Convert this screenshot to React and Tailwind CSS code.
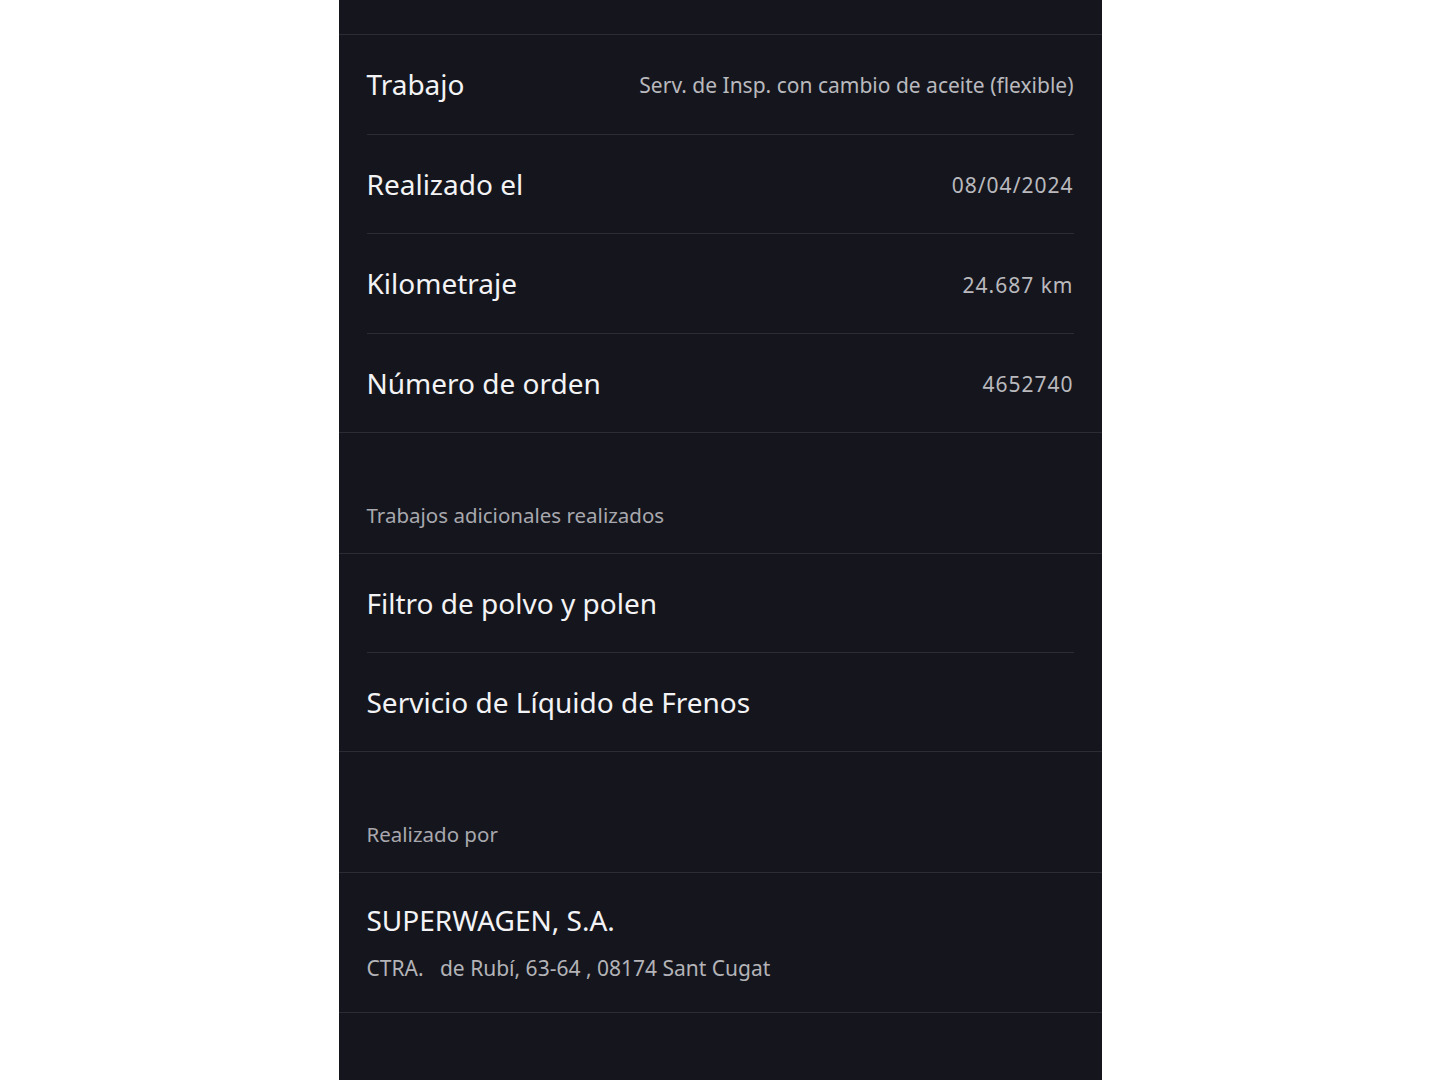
const details = [
  { label: 'Trabajo', value: 'Serv. de Insp. con cambio de aceite (flexible)' },
  { label: 'Realizado el', value: '08/04/2024', numeric: true },
  { label: 'Kilometraje', value: '24.687 km', numeric: true },
  { label: 'Número de orden', value: '4652740', numeric: true },
];

const extras = ['Filtro de polvo y polen', 'Servicio de Líquido de Frenos'];

function SectionHeader({ children }) {
  return (
    <div className="flex h-[121px] items-end border-b border-[#2c2d34] px-7 pb-[24px] text-[20.5px] leading-7 text-[#a8a8ae]">
      {children}
    </div>
  );
}

export default function App() {
  return (
    <div
      className="flex min-h-[1080px] justify-center bg-white"
      style={{ fontFamily: '"Noto Sans", "Open Sans", sans-serif' }}
    >
      <div className="flex w-[763px] flex-col bg-[#15161d]">
        <div className="h-[35px] border-b border-[#2c2d34]" />

        <div className="border-b border-[#2c2d34] px-7">
          {details.map((d, i) => (
            <div
              key={d.label}
              className={`flex items-center justify-between ${
                i < details.length - 1
                  ? 'h-[99.5px] border-b border-[#2c2d34]'
                  : 'h-[98px]'
              }`}
            >
              <span className="text-[28px] text-[#f3f3f5]">{d.label}</span>
              <span
                className={`text-[21px] text-[#b9b9be] ${
                  d.numeric ? 'mt-1 tracking-[1px]' : 'mt-0.5'
                }`}
              >
                {d.value}
              </span>
            </div>
          ))}
        </div>

        <SectionHeader>Trabajos adicionales realizados</SectionHeader>

        <div className="border-b border-[#2c2d34] px-7">
          {extras.map((e, i) => (
            <div
              key={e}
              className={`flex items-center ${
                i < extras.length - 1
                  ? 'h-[99px] border-b border-[#2c2d34]'
                  : 'h-[98px]'
              }`}
            >
              <span className="text-[28px] text-[#f3f3f5]">{e}</span>
            </div>
          ))}
        </div>

        <SectionHeader>Realizado por</SectionHeader>

        <div className="flex h-[140px] flex-col justify-center border-b border-[#2c2d34] px-7 pt-0.5">
          <span className="text-[28px] leading-9 text-[#f3f3f5]">SUPERWAGEN, S.A.</span>
          <span className="mt-[15px] whitespace-pre text-[21px] text-[#b3b3b8]">
            {'CTRA.   de Rubí, 63-64 , 08174 Sant Cugat'}
          </span>
        </div>

        <div className="flex-1" />
      </div>
    </div>
  );
}
